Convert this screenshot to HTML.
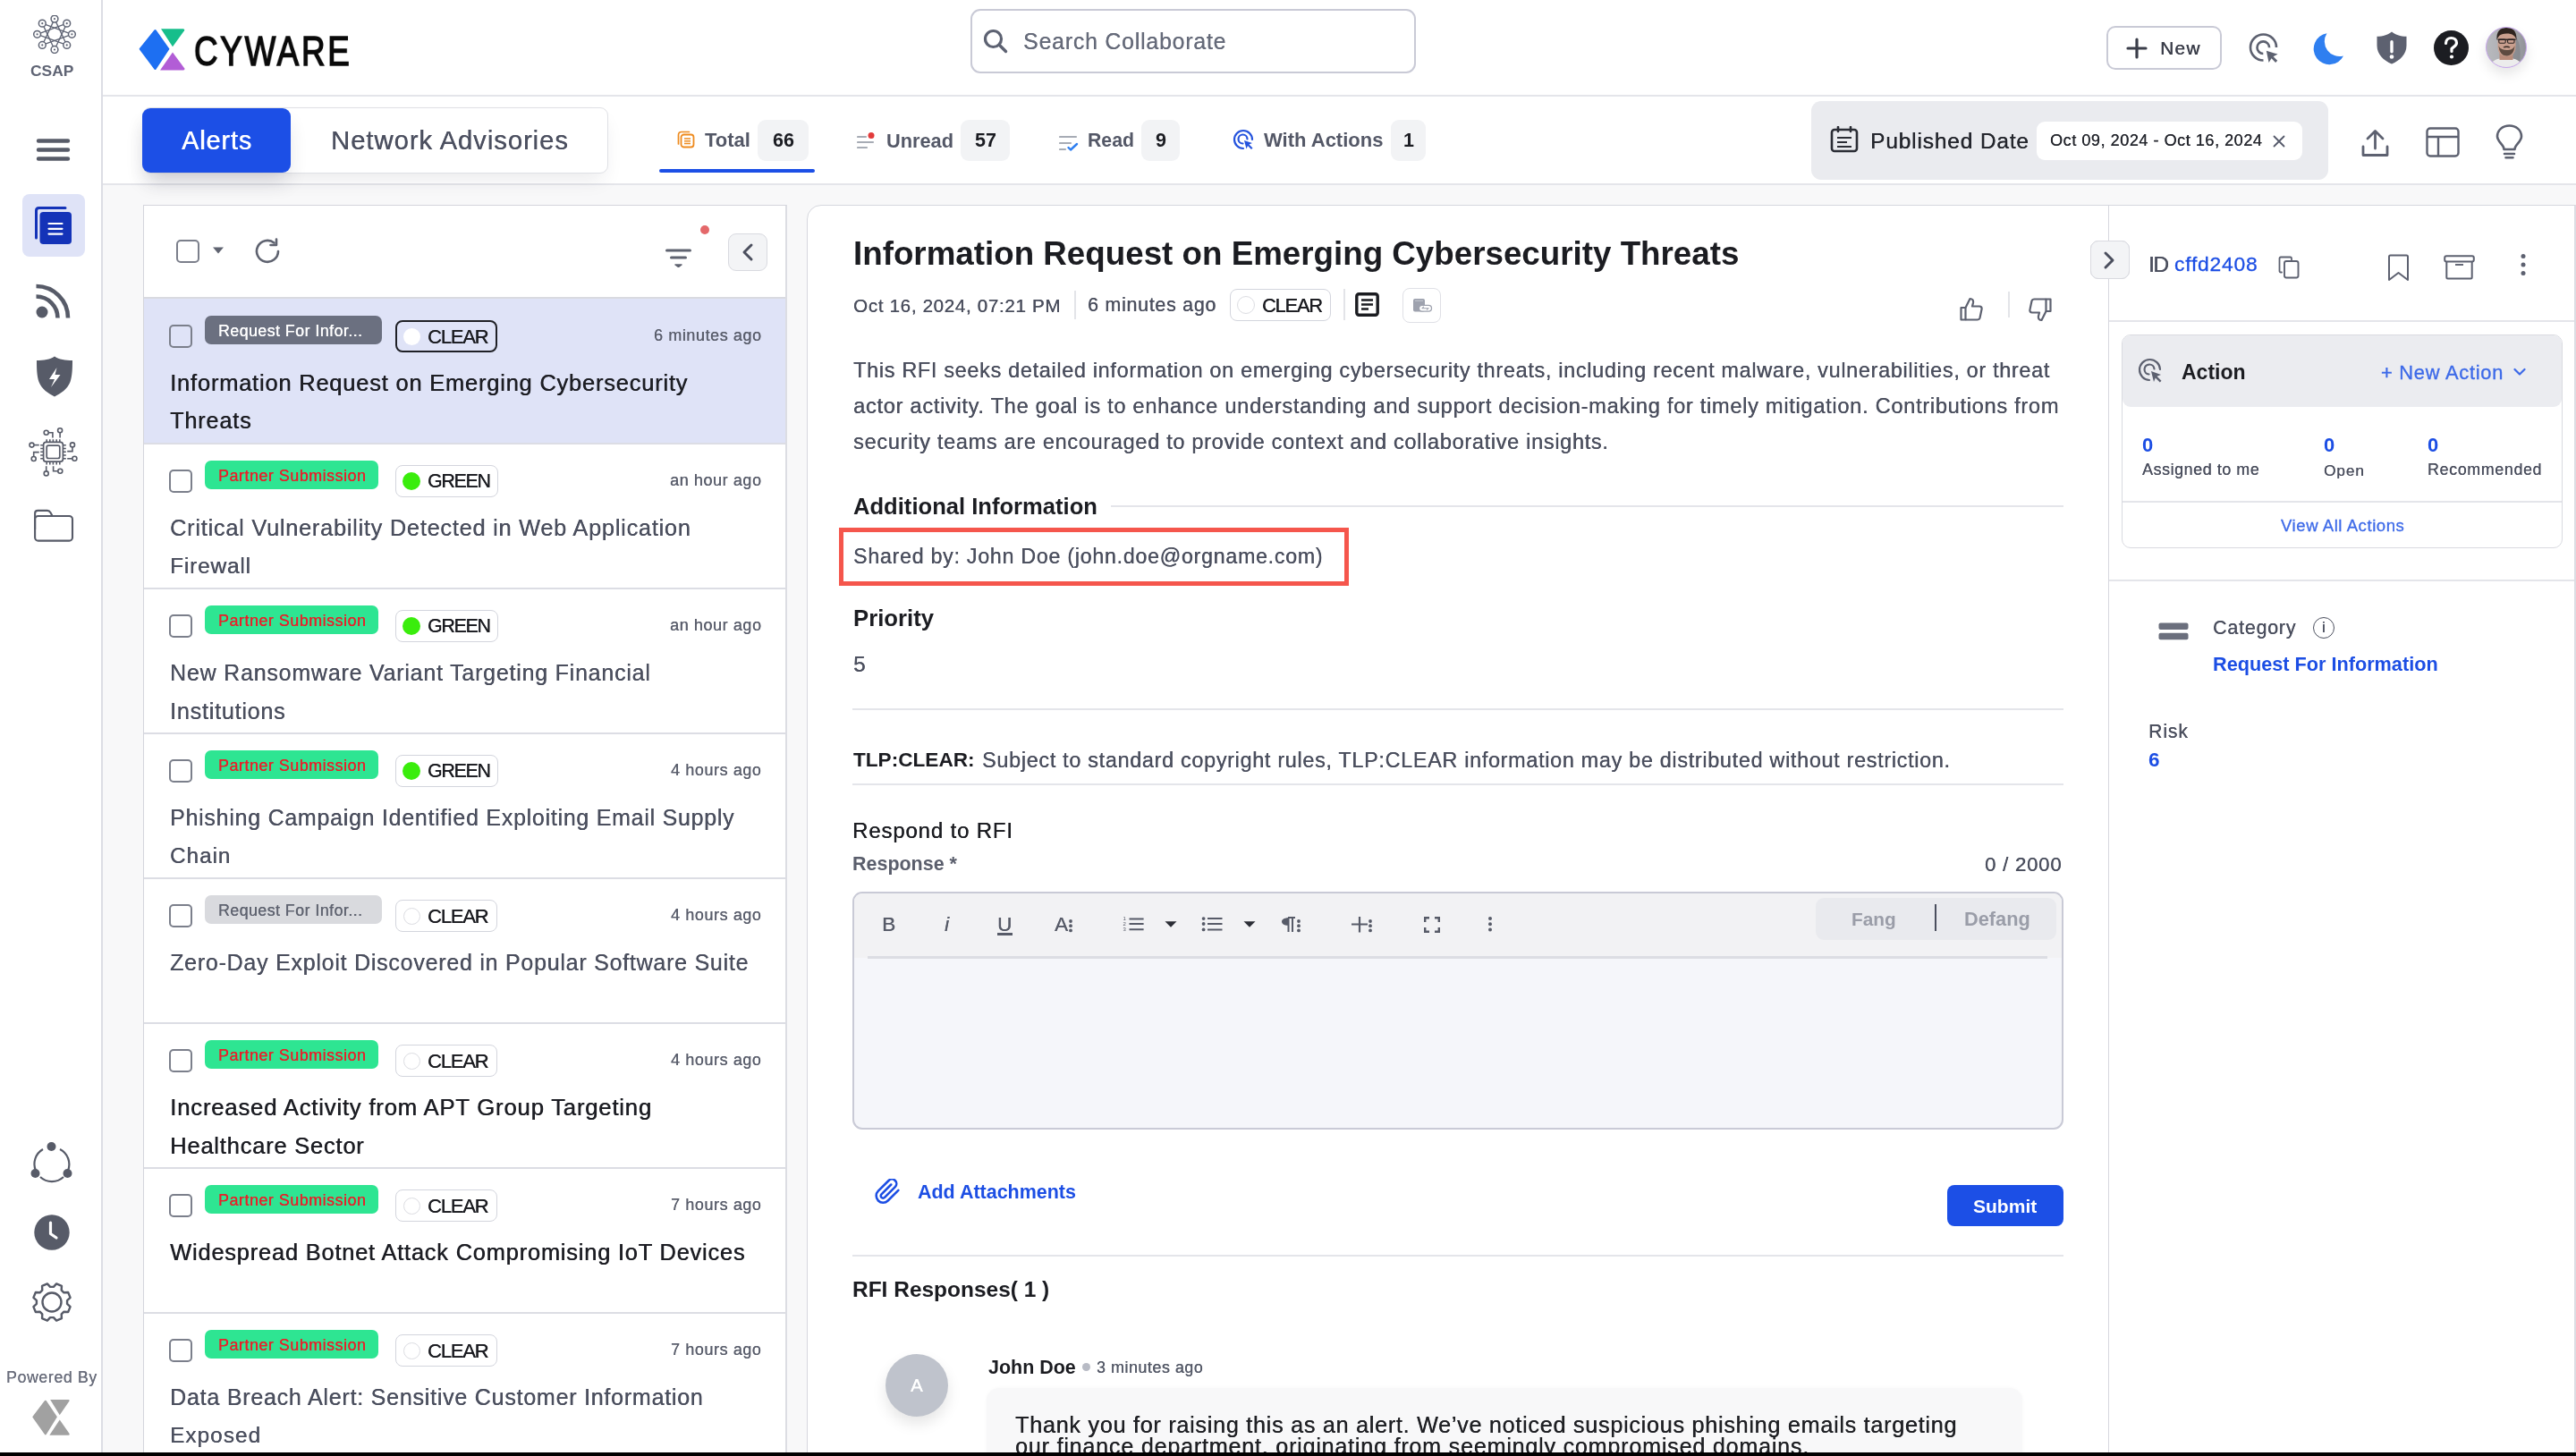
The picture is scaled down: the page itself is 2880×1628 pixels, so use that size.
<!DOCTYPE html>
<html><head><meta charset="utf-8"><title>Cyware CSAP</title>
<style>
html,body{margin:0;padding:0;}
body{width:2880px;height:1628px;position:relative;overflow:hidden;background:#f8f8f9;
 font-family:"Liberation Sans",sans-serif;}
.a{position:absolute;box-sizing:border-box;}
.t{position:absolute;white-space:nowrap;will-change:transform;}
</style></head><body>
<div class="a" style="left:115px;top:0px;width:2765px;height:206px;background:#fff;"></div>
<div class="a" style="left:115px;top:106px;width:2765px;height:2px;background:#e4e5ea;"></div>
<div class="a" style="left:115px;top:205px;width:2765px;height:2px;background:#e4e5ea;"></div>
<div class="a" style="left:0px;top:0px;width:114px;height:1628px;background:#fff;"></div>
<div class="a" style="left:113px;top:0px;width:2px;height:1628px;background:#dcdde4;"></div>
<div class="a" style="left:160px;top:229px;width:720px;height:1411px;background:#fff;border:1px solid #d4d5dc;border-right:2px solid #dcdde3;"></div>
<div class="a" style="left:902px;top:229px;width:1478px;height:1411px;background:#fff;border:1px solid #d6d7de;border-top-left-radius:16px;"></div>
<div class="a" style="left:2357px;top:229px;width:523px;height:1411px;background:#fff;border:1px solid #d6d7de;border-right:2px solid #dcdde3;"></div>
<svg class="a" style="left:150px;top:28px;width:62px;height:56px;" viewBox="150 28 62 56" fill="none"><path d="M172.5 33.5 Q173.5 32.6 174.5 33.5 L189.5 54.8 L174.5 77.6 Q173.5 78.6 172.5 77.6 L156 55.6 Q155.3 54.8 156 54 Z" fill="#1d6ff2"/><path d="M180 32.3 L205 32.3 Q207 32.6 206 34.3 L193 52.3 Z" fill="#17be8b"/><path d="M193 58.4 L206.3 76.6 Q207 78.5 205 78.5 L179 78.5 Z" fill="#b25dd6"/></svg>
<div class="t " style="left:216.70px;top:27.56px;font-size:46.00px;line-height:58px;color:#0a0a0a;transform:scaleX(0.8);transform-origin:0 0;letter-spacing:3.400px;-webkit-text-stroke:1.5px #0a0a0a;">CYWARE</div>
<div class="a" style="left:1085px;top:10px;width:498px;height:72px;border:2px solid #c9cad6;border-radius:11px;background:#fff;"></div>
<svg class="a" style="left:1099px;top:32px;width:28px;height:28px;" viewBox="0 0 28 28" fill="none"><circle cx="11.5" cy="11.5" r="9" stroke="#5d6272" stroke-width="3.2"/><path d="M18.5 18.5 L25.5 25.5" stroke="#5d6272" stroke-width="3.4" stroke-linecap="round"/></svg>
<div class="t " style="left:1143.80px;top:31.08px;font-size:24.87px;line-height:31px;color:#666b7a;letter-spacing:0.799px;text-shadow:0.3px 0 0 #666b7a;">Search Collaborate</div>
<div class="a" style="left:2355px;top:29px;width:129px;height:49px;border:2px solid #c9cad6;border-radius:10px;background:#fff;"></div>
<svg class="a" style="left:2377px;top:42px;width:24px;height:24px;" viewBox="0 0 24 24" fill="none"><path d="M12 2 V22 M2 12 H22" stroke="#3b3e4a" stroke-width="3.2" stroke-linecap="round"/></svg>
<div class="t " style="left:2415.40px;top:41.00px;font-size:20.77px;line-height:26px;color:#3b3e4a;letter-spacing:1.326px;text-shadow:0.5px 0 0 #3b3e4a;">New</div>
<svg class="a" style="left:2510px;top:30px;width:40px;height:45px;" viewBox="0 0 40 45" fill="none"><path d="M20.5 37.5 A14.5 14.5 0 1 1 35 23" stroke="#5d6170" stroke-width="2.6"/><path d="M20.3 30 A6.8 6.8 0 1 1 27.1 23.2" stroke="#5d6170" stroke-width="2.6"/><path d="M23.8 26.8 L36.6 30.6 L31.6 33.2 L36.2 37.8 L34.1 39.9 L29.5 35.3 L26.6 40 Z" fill="#5d6170"/></svg>
<svg class="a" style="left:2586px;top:36px;width:35px;height:37px;" viewBox="0 0 35 37" fill="none"><path d="M15.5 1.2 A17.6 17.6 0 1 0 34 26.5 A16.8 16.8 0 0 1 15.5 1.2 Z" fill="#2f7ff0"/></svg>
<svg class="a" style="left:2657px;top:35px;width:34px;height:37px;" viewBox="0 0 34 37" fill="none"><path d="M17 0.5 C20 3.5 27 5.8 33.5 5.8 V16 C33.5 26 26 32.5 17 36.5 C8 32.5 0.5 26 0.5 16 V5.8 C7 5.8 14 3.5 17 0.5 Z" fill="#5d6170"/><rect x="15.3" y="10" width="3.4" height="14.5" rx="1.7" fill="#fff"/><circle cx="17" cy="28.5" r="2.3" fill="#fff"/></svg>
<svg class="a" style="left:2721px;top:34px;width:39px;height:39px;" viewBox="0 0 39 39" fill="none"><circle cx="19.5" cy="19.5" r="19.5" fill="#1c1d22"/><path d="M13.5 14.5 C13.5 10.5 16.5 8.5 19.5 8.5 C23 8.5 25.5 10.8 25.5 14 C25.5 17.5 21.5 18.5 20 20.5 V23.5" stroke="#fff" stroke-width="3.2" stroke-linecap="round" fill="none"/><circle cx="20" cy="29.5" r="2.1" fill="#fff"/></svg>
<div class="a" style="left:2779px;top:30px;width:46px;height:46px;border-radius:50%;box-shadow:0 7px 14px rgba(0,0,0,0.10);"></div>
<svg class="a" style="left:2779px;top:30px;width:46px;height:46px;" viewBox="0 0 46 46" fill="none"><defs><clipPath id="avc"><circle cx="23" cy="23" r="22.6"/></clipPath><linearGradient id="avbg" x1="0" y1="0" x2="1" y2="0"><stop offset="0" stop-color="#b9babe"/><stop offset="0.6" stop-color="#a9abb0"/><stop offset="1" stop-color="#8f9196"/></linearGradient></defs><g clip-path="url(#avc)"><rect width="46" height="46" fill="url(#avbg)"/><path d="M31 8 C38 14 40 26 38 40 L30 40 Z" fill="#7d7f84" opacity="0.6"/><path d="M4 46 C6 38 12 35 23 35 C34 35 40 38 42 46 Z" fill="#ececec"/><rect x="15.5" y="28" width="15" height="9" fill="#b98c7a"/><path d="M13.5 12 C13.5 6 17.5 4 23.5 4 C29.5 4 33.5 6 33.5 12 V22 C33.5 30 29 33 23.5 33 C18 33 13.5 30 13.5 22 Z" fill="#c99f8e"/><path d="M14.5 21 C15 29 19 32.5 23.5 32.5 C28 32.5 32 29 32.5 21 C31 25 28 26 23.5 26 C19 26 16 25 14.5 21 Z" fill="#5e4b40"/><path d="M19.5 22.5 C21 21 26 21 27.5 22.5 L26.5 23.5 C25 22.8 22 22.8 20.5 23.5 Z" fill="#3a2c26"/><path d="M12.5 15 C11.5 5 16.5 1 23 1 C30 1 35 4 34.5 15 C33.5 10 30 7.5 23.5 7.5 C17 7.5 14 10 12.5 15 Z" fill="#2e241f"/><path d="M13.5 14.2 H33.5" stroke="#2a2322" stroke-width="1.4"/><rect x="14.8" y="14" width="7.4" height="4.2" rx="1.2" stroke="#2a2322" stroke-width="1.1" fill="none"/><rect x="24.6" y="14" width="7.4" height="4.2" rx="1.2" stroke="#2a2322" stroke-width="1.1" fill="none"/></g><circle cx="23" cy="23" r="22.5" stroke="#c7a6ec" stroke-width="1" fill="none"/></svg>
<div class="a" style="left:159px;top:120px;width:521px;height:74px;border:1px solid #dfe0e5;border-radius:9px;background:#fff;box-shadow:0 12px 22px -6px rgba(40,40,60,0.10);"></div>
<div class="a" style="left:159px;top:121px;width:166px;height:72px;background:#1c4fe6;border-radius:9px;box-shadow:0 14px 22px -4px rgba(40,40,60,0.16);"></div>
<div class="t " style="left:203.00px;top:139.16px;font-size:28.68px;line-height:36px;color:#fff;letter-spacing:0.936px;text-shadow:0.6px 0 0 #fff;">Alerts</div>
<div class="t " style="left:369.50px;top:138.45px;font-size:29.29px;line-height:37px;color:#4c5060;letter-spacing:0.935px;text-shadow:0.3px 0 0 #4c5060;">Network Advisories</div>
<svg class="a" style="left:757px;top:146px;width:20px;height:20px;" viewBox="0 0 20 20" fill="none"><path d="M1.5 15 V5 C1.5 3 3 1.5 5 1.5 H13.5" stroke="#ee8b1f" stroke-width="1.7" stroke-linecap="round"/><rect x="4.5" y="4.5" width="14" height="14" rx="3" stroke="#ee8b1f" stroke-width="1.8"/><path d="M8 9 H15 M8 11.7 H15 M8 14.4 H15" stroke="#ee8b1f" stroke-width="1.5"/></svg>
<div class="t " style="left:788.00px;top:143.26px;font-size:22.03px;line-height:28px;color:#545867;font-weight:700;">Total</div>
<div class="a" style="left:847px;top:134px;width:57px;height:46px;background:#f2f3f5;border-radius:9px;"></div>
<div class="t " style="left:863.54px;top:144.45px;font-size:21.50px;line-height:27px;color:#1b1c22;font-weight:700;">66</div>
<svg class="a" style="left:958px;top:148px;width:22px;height:20px;" viewBox="0 0 22 20" fill="none"><path d="M1 5 H10 M1 11 H18 M1 17 H11" stroke="#a7acb5" stroke-width="2.2" stroke-linecap="round"/><circle cx="16" cy="3.5" r="3.5" fill="#e23b3b"/></svg>
<div class="t " style="left:991.00px;top:143.86px;font-size:21.77px;line-height:27px;color:#545867;font-weight:700;">Unread</div>
<div class="a" style="left:1074px;top:134px;width:55px;height:46px;background:#f2f3f5;border-radius:9px;"></div>
<div class="t " style="left:1089.54px;top:144.45px;font-size:21.50px;line-height:27px;color:#1b1c22;font-weight:700;">57</div>
<svg class="a" style="left:1184px;top:151px;width:22px;height:19px;" viewBox="0 0 22 19" fill="none"><path d="M1 2 H19 M1 9 H13 M1 16 H7" stroke="#a7acb5" stroke-width="2.2" stroke-linecap="round"/><path d="M10.5 14 L13 16.5 L20 10" stroke="#2f7ff0" stroke-width="2.4" stroke-linecap="round" stroke-linejoin="round"/></svg>
<div class="t " style="left:1216.00px;top:144.03px;font-size:21.26px;line-height:27px;color:#545867;font-weight:700;">Read</div>
<div class="a" style="left:1276px;top:134px;width:43px;height:46px;background:#f2f3f5;border-radius:9px;"></div>
<div class="t " style="left:1291.52px;top:144.45px;font-size:21.50px;line-height:27px;color:#1b1c22;font-weight:700;">9</div>
<svg class="a" style="left:1378px;top:144px;width:24px;height:24px;" viewBox="0 0 24 24" fill="none"><path d="M12 22 A10 10 0 1 1 22 12" stroke="#2453dd" stroke-width="2.2" stroke-linecap="round"/><path d="M11.5 16.5 A5 5 0 1 1 16.5 11.5" stroke="#2453dd" stroke-width="2.2" stroke-linecap="round"/><path d="M13 13 L22 16 L18.5 17.5 L22.5 21.5 L21 23 L17 19 L15.5 22.5 Z" fill="#2453dd"/></svg>
<div class="t " style="left:1412.50px;top:143.27px;font-size:22.01px;line-height:28px;color:#545867;font-weight:700;">With Actions</div>
<div class="a" style="left:1555px;top:134px;width:39px;height:46px;background:#f2f3f5;border-radius:9px;"></div>
<div class="t " style="left:1568.52px;top:144.45px;font-size:21.50px;line-height:27px;color:#1b1c22;font-weight:700;">1</div>
<div class="a" style="left:737px;top:189px;width:174px;height:4px;background:#1c4fe6;border-radius:2px;"></div>
<div class="a" style="left:2025px;top:113px;width:578px;height:88px;background:#eaebef;border-radius:11px;"></div>
<svg class="a" style="left:2046px;top:141px;width:32px;height:30px;" viewBox="0 0 32 30" fill="none"><rect x="2" y="4" width="28" height="24" rx="3" stroke="#2b2d35" stroke-width="2.6"/><path d="M9 1 V6 M23 1 V6" stroke="#2b2d35" stroke-width="2.6" stroke-linecap="round"/><path d="M8 13 H24 M8 18 H19 M8 23 H24" stroke="#2b2d35" stroke-width="2.2"/></svg>
<div class="t " style="left:2091.00px;top:141.80px;font-size:24.53px;line-height:31px;color:#24262d;letter-spacing:0.817px;text-shadow:0.3px 0 0 #24262d;">Published Date</div>
<div class="a" style="left:2277px;top:136px;width:297px;height:43px;background:#fff;border-radius:9px;"></div>
<div class="t " style="left:2292.00px;top:146.35px;font-size:18.05px;line-height:23px;color:#25272e;letter-spacing:0.547px;text-shadow:0.3px 0 0 #25272e;">Oct 09, 2024 - Oct 16, 2024</div>
<svg class="a" style="left:2541px;top:151px;width:14px;height:14px;" viewBox="0 0 14 14" fill="none"><path d="M1.5 1.5 L12.5 12.5 M12.5 1.5 L1.5 12.5" stroke="#55596a" stroke-width="1.8" stroke-linecap="round"/></svg>
<svg class="a" style="left:2640px;top:144px;width:31px;height:32px;" viewBox="0 0 31 32" fill="none"><path d="M15.5 22 V3 M7 11 L15.5 2.5 L24 11" stroke="#5d6170" stroke-width="2.8" stroke-linecap="round" stroke-linejoin="round"/><path d="M2 20 V29.5 H29 V20" stroke="#5d6170" stroke-width="2.8" stroke-linecap="round" stroke-linejoin="round"/></svg>
<svg class="a" style="left:2712px;top:142px;width:38px;height:34px;" viewBox="0 0 38 34" fill="none"><rect x="1.5" y="1.5" width="35" height="31" rx="3.5" stroke="#5d6170" stroke-width="2.4"/><path d="M1.5 11 H36.5 M14 11 V32.5" stroke="#5d6170" stroke-width="2.4"/></svg>
<svg class="a" style="left:2790px;top:139px;width:31px;height:39px;" viewBox="0 0 31 39" fill="none"><path d="M9.5 28 C9.5 23 2 19.5 2 13.5 C2 6.5 8 1.5 15.5 1.5 C23 1.5 29 6.5 29 13.5 C29 19.5 21.5 23 21.5 28 Z" stroke="#5d6170" stroke-width="2.6" stroke-linejoin="round"/><path d="M10 33 H21 M11.5 37.2 H19.5" stroke="#5d6170" stroke-width="2.6" stroke-linecap="round"/></svg>
<svg class="a" style="left:36px;top:17px;width:50px;height:43px;" viewBox="0 0 50 43" fill="none"><path d="M25.00 4.10 L38.72 33.46" stroke="#5f6474" stroke-width="1.3"/><path d="M38.72 9.14 L25.00 38.50" stroke="#5f6474" stroke-width="1.3"/><path d="M44.40 21.30 L11.28 33.46" stroke="#5f6474" stroke-width="1.3"/><path d="M38.72 33.46 L5.60 21.30" stroke="#5f6474" stroke-width="1.3"/><path d="M25.00 38.50 L11.28 9.14" stroke="#5f6474" stroke-width="1.3"/><path d="M11.28 33.46 L25.00 4.10" stroke="#5f6474" stroke-width="1.3"/><path d="M5.60 21.30 L38.72 9.14" stroke="#5f6474" stroke-width="1.3"/><path d="M11.28 9.14 L44.40 21.30" stroke="#5f6474" stroke-width="1.3"/><circle cx="25.00" cy="4.10" r="3.9" fill="#fff" stroke="#5f6474" stroke-width="1.5"/><circle cx="25.00" cy="4.10" r="1.1" fill="#5f6474"/><circle cx="38.72" cy="9.14" r="3.9" fill="#fff" stroke="#5f6474" stroke-width="1.5"/><circle cx="38.72" cy="9.14" r="1.1" fill="#5f6474"/><circle cx="44.40" cy="21.30" r="3.9" fill="#fff" stroke="#5f6474" stroke-width="1.5"/><circle cx="44.40" cy="21.30" r="1.1" fill="#5f6474"/><circle cx="38.72" cy="33.46" r="3.9" fill="#fff" stroke="#5f6474" stroke-width="1.5"/><circle cx="38.72" cy="33.46" r="1.1" fill="#5f6474"/><circle cx="25.00" cy="38.50" r="3.9" fill="#fff" stroke="#5f6474" stroke-width="1.5"/><circle cx="25.00" cy="38.50" r="1.1" fill="#5f6474"/><circle cx="11.28" cy="33.46" r="3.9" fill="#fff" stroke="#5f6474" stroke-width="1.5"/><circle cx="11.28" cy="33.46" r="1.1" fill="#5f6474"/><circle cx="5.60" cy="21.30" r="3.9" fill="#fff" stroke="#5f6474" stroke-width="1.5"/><circle cx="5.60" cy="21.30" r="1.1" fill="#5f6474"/><circle cx="11.28" cy="9.14" r="3.9" fill="#fff" stroke="#5f6474" stroke-width="1.5"/><circle cx="11.28" cy="9.14" r="1.1" fill="#5f6474"/></svg>
<div class="t " style="left:33.50px;top:67.66px;font-size:17.42px;line-height:22px;color:#5f6474;font-weight:700;">CSAP</div>
<svg class="a" style="left:40px;top:154px;width:39px;height:27px;" viewBox="0 0 39 27" fill="none"><path d="M3 3.5 H36 M3 13.5 H36 M3 23.5 H36" stroke="#575b68" stroke-width="4.4" stroke-linecap="round"/></svg>
<div class="a" style="left:25px;top:217px;width:70px;height:70px;background:#dfe3f7;border-radius:8px;"></div>
<svg class="a" style="left:38px;top:231px;width:44px;height:44px;" viewBox="0 0 44 44" fill="none"><path d="M2.5 35 V4.5 C2.5 2.5 3.5 1.5 5.5 1.5 H35" stroke="#1433b8" stroke-width="3" stroke-linecap="round"/><rect x="6.5" y="6" width="35.5" height="36" rx="4" fill="#1433b8"/><path d="M16.5 19 H31.5 M16.5 24.8 H31.5 M16.5 30.6 H31.5" stroke="#fff" stroke-width="2.2" stroke-linecap="round"/></svg>
<svg class="a" style="left:40px;top:317px;width:39px;height:39px;" viewBox="0 0 39 39" fill="none"><circle cx="7" cy="32" r="6.5" fill="#575b68"/><path d="M0.5 14.5 A24 24 0 0 1 24.5 38.5" stroke="#575b68" stroke-width="4.6"/><path d="M0.5 3 A35.5 35.5 0 0 1 36 38.5" stroke="#575b68" stroke-width="4.6"/></svg>
<svg class="a" style="left:40px;top:398px;width:42px;height:46px;" viewBox="0 0 42 46" fill="none"><path d="M21 0.5 C26 4 33 5 41 5 C41 12 41 22 38.5 29 C35.5 37 28 42 21 45.5 C14 42 6.5 37 3.5 29 C1 22 1 12 1 5 C9 5 16 4 21 0.5 Z" fill="#575b68"/><path d="M23.5 13 L15 26 H21 L17 35 L27.5 21 H21.5 Z" fill="#fff"/></svg>
<svg class="a" style="left:25px;top:470px;width:70px;height:70px;" viewBox="0 0 70 70" fill="none"><rect x="23.6" y="24.3" width="21.8" height="21.9" rx="3" stroke="#575b68" stroke-width="1.7"/><rect x="27.2" y="28.1" width="14.6" height="14.4" rx="2" stroke="#575b68" stroke-width="1.7"/><path d="M27.2 21.2 V24 M27.2 46.6 V49.5" stroke="#575b68" stroke-width="1.6"/><path d="M30.8 21.2 V24 M30.8 46.6 V49.5" stroke="#575b68" stroke-width="1.6"/><path d="M34.4 21.2 V24 M34.4 46.6 V49.5" stroke="#575b68" stroke-width="1.6"/><path d="M38.2 21.2 V24 M38.2 46.6 V49.5" stroke="#575b68" stroke-width="1.6"/><path d="M41.8 21.2 V24 M41.8 46.6 V49.5" stroke="#575b68" stroke-width="1.6"/><path d="M20.2 27.8 H23 M45.9 27.8 H48.8" stroke="#575b68" stroke-width="1.6"/><path d="M20.2 31.5 H23 M45.9 31.5 H48.8" stroke="#575b68" stroke-width="1.6"/><path d="M20.2 35.3 H23 M45.9 35.3 H48.8" stroke="#575b68" stroke-width="1.6"/><path d="M20.2 39 H23 M45.9 39 H48.8" stroke="#575b68" stroke-width="1.6"/><path d="M20.2 42.7 H23 M45.9 42.7 H48.8" stroke="#575b68" stroke-width="1.6"/><path d="M33.9 19.5 V13.7 H29.2" stroke="#575b68" stroke-width="1.6"/><circle cx="26.7" cy="13.7" r="2.5" stroke="#575b68" stroke-width="1.6"/><path d="M42.1 19.5 V13.9" stroke="#575b68" stroke-width="1.6"/><circle cx="42.1" cy="11.3" r="2.5" stroke="#575b68" stroke-width="1.6"/><path d="M18.75 27.6 H13.1" stroke="#575b68" stroke-width="1.6"/><circle cx="10.5" cy="27.6" r="2.5" stroke="#575b68" stroke-width="1.6"/><path d="M18.75 35.6 H12.7 V40.4" stroke="#575b68" stroke-width="1.6"/><circle cx="12.7" cy="43" r="2.5" stroke="#575b68" stroke-width="1.6"/><path d="M50.2 34.6 H56 V30" stroke="#575b68" stroke-width="1.6"/><circle cx="56" cy="27.4" r="2.5" stroke="#575b68" stroke-width="1.6"/><path d="M50.2 42.8 H55.8" stroke="#575b68" stroke-width="1.6"/><circle cx="58.4" cy="42.8" r="2.5" stroke="#575b68" stroke-width="1.6"/><path d="M26.7 51.2 V56.8" stroke="#575b68" stroke-width="1.6"/><circle cx="26.7" cy="59.4" r="2.5" stroke="#575b68" stroke-width="1.6"/><path d="M34.6 51.2 V56.7 H39.7" stroke="#575b68" stroke-width="1.6"/><circle cx="42.3" cy="56.7" r="2.5" stroke="#575b68" stroke-width="1.6"/></svg>
<svg class="a" style="left:30px;top:560px;width:60px;height:55px;" viewBox="30 560 60 55" fill="none"><rect x="39.1" y="577" width="41.9" height="27.6" rx="3.6" stroke="#575b68" stroke-width="2.1"/><path d="M39.1 592 V574 C39.1 572 40.4 570.9 42.4 570.9 H53 C54.6 570.9 55.6 571.6 56.4 573 L58.6 577" stroke="#575b68" stroke-width="2.1" stroke-linejoin="round"/></svg>
<svg class="a" style="left:34px;top:1276px;width:48px;height:49px;" viewBox="0 0 48 49" fill="none"><path d="M14 9 A19 19 0 0 0 6 33" stroke="#575b68" stroke-width="2.2"/><path d="M33 9 A19 19 0 0 1 42 33" stroke="#575b68" stroke-width="2.2"/><path d="M11 40 A19 19 0 0 0 37 40" stroke="#575b68" stroke-width="2.2"/><circle cx="23.5" cy="6" r="5" fill="#575b68"/><circle cx="5.5" cy="36" r="5" fill="#575b68"/><circle cx="41.5" cy="36" r="5" fill="#575b68"/></svg>
<svg class="a" style="left:38px;top:1358px;width:40px;height:40px;" viewBox="0 0 40 40" fill="none"><circle cx="20" cy="20" r="19.7" fill="#575b68"/><path d="M18.5 9 V21.5 L25 26" stroke="#fff" stroke-width="3.2" stroke-linecap="round" stroke-linejoin="round"/></svg>
<svg class="a" style="left:34.6px;top:1433.3px;width:45.99999999999999px;height:46.0px;" viewBox="0 0 46 46" fill="none"><path d="M24.93 5.91 L28.09 2.42 L33.95 4.85 L33.72 9.55 L36.45 12.28 L41.15 12.05 L43.58 17.91 L40.09 21.07 L40.09 24.93 L43.58 28.09 L41.15 33.95 L36.45 33.72 L33.72 36.45 L33.95 41.15 L28.09 43.58 L24.93 40.09 L21.07 40.09 L17.91 43.58 L12.05 41.15 L12.28 36.45 L9.55 33.72 L4.85 33.95 L2.42 28.09 L5.91 24.93 L5.91 21.07 L2.42 17.91 L4.85 12.05 L9.55 12.28 L12.28 9.55 L12.05 4.85 L17.91 2.42 L21.07 5.91 Z" stroke="#575b68" stroke-width="2.4" stroke-linejoin="round"/><circle cx="23" cy="23" r="10.5" stroke="#575b68" stroke-width="2.4"/></svg>
<div class="t " style="left:7.00px;top:1529.39px;font-size:17.64px;line-height:22px;color:#6a6e7c;letter-spacing:0.675px;text-shadow:0.3px 0 0 #6a6e7c;">Powered By</div>
<svg class="a" style="left:36px;top:1565px;width:42px;height:40px;" viewBox="155.3 32.3 51.5 46.5" preserveAspectRatio="none" fill="none"><path d="M172.5 33.5 Q173.5 32.6 174.5 33.5 L189.5 54.8 L174.5 77.6 Q173.5 78.6 172.5 77.6 L156 55.6 Q155.3 54.8 156 54 Z" fill="#a1a1a1"/><path d="M180 32.3 L205 32.3 Q207 32.6 206 34.3 L193 52.3 Z" fill="#a1a1a1"/><path d="M193 58.4 L206.3 76.6 Q207 78.5 205 78.5 L179 78.5 Z" fill="#a1a1a1"/></svg>
<div class="a" style="left:197px;top:268px;width:26px;height:26px;border:2px solid #7b7f8b;border-radius:5px;"></div>
<svg class="a" style="left:237px;top:276px;width:14px;height:8px;" viewBox="0 0 14 8" fill="none"><path d="M1 0.5 H13 L7 7.5 Z" fill="#5f6370"/></svg>
<svg class="a" style="left:284px;top:266px;width:32px;height:30px;" viewBox="0 0 32 30" fill="none"><path d="M27 15 A12 12 0 1 1 22.5 5.5" stroke="#5f6370" stroke-width="2.6" stroke-linecap="round"/><path d="M25 1.5 V8 H18.5" stroke="#5f6370" stroke-width="2.6" stroke-linecap="round" stroke-linejoin="round"/></svg>
<svg class="a" style="left:744px;top:277px;width:29px;height:22px;" viewBox="0 0 29 22" fill="none"><path d="M1.5 3 H27.5" stroke="#5f6370" stroke-width="3" stroke-linecap="round"/><path d="M6.5 11 H22.5" stroke="#5f6370" stroke-width="3" stroke-linecap="round"/><path d="M11 19 H18 L14.5 21.5 Z" fill="#5f6370" stroke="#5f6370" stroke-width="1.5" stroke-linejoin="round"/></svg>
<div class="a" style="left:783px;top:252px;width:10px;height:10px;border-radius:50%;background:#e4686a;"></div>
<div class="a" style="left:814px;top:261px;width:44px;height:42px;background:#f3f4f6;border:1px solid #d9dae0;border-radius:9px;"></div>
<svg class="a" style="left:828px;top:271px;width:16px;height:22px;" viewBox="0 0 16 22" fill="none"><path d="M12 3 L4 11 L12 19" stroke="#4b4f5e" stroke-width="3" stroke-linecap="round" stroke-linejoin="round"/></svg>
<div class="a" style="left:161px;top:332px;width:717px;height:2px;background:#d9dae0;"></div>
<div class="a" style="left:161px;top:334px;width:717px;height:162px;background:#dfe3f7;"></div>
<div class="a" style="left:161px;top:495px;width:717px;height:2px;background:#dcdde4;"></div>
<div class="a" style="left:189px;top:363px;width:26px;height:26px;border:2px solid #7b7f8b;border-radius:5px;"></div>
<div class="a" style="left:229px;top:353px;width:198px;height:32px;background:#6b7080;border-radius:7px;"></div>
<div class="t " style="left:243.70px;top:358.87px;font-size:17.68px;line-height:22px;color:#fff;letter-spacing:0.508px;text-shadow:0.3px 0 0 #fff;">Request For Infor...</div>
<div class="a" style="left:442px;top:358px;width:114px;height:36px;border:2px solid #1f2026;border-radius:8px;background:#dfe3f7;"></div>
<div class="a" style="left:451px;top:367px;width:19px;height:19px;border-radius:50%;background:#fff;"></div>
<div class="t " style="left:477.50px;top:362.88px;font-size:21.98px;line-height:27px;color:#1b1c21;letter-spacing:-1.199px;text-shadow:0.3px 0 0 #1b1c21;">CLEAR</div>
<div class="t " style="left:731.01px;top:364.28px;font-size:17.95px;line-height:22px;color:#5a5e6c;letter-spacing:0.600px;text-shadow:0.3px 0 0 #5a5e6c;">6 minutes ago</div>
<div class="t " style="left:189.60px;top:412.17px;font-size:25.47px;line-height:32px;color:#1d1e24;letter-spacing:0.789px;text-shadow:0.5px 0 0 #1d1e24;">Information Request on Emerging Cybersecurity</div>
<div class="t " style="left:189.60px;top:455.31px;font-size:25.09px;line-height:31px;color:#1d1e24;letter-spacing:0.905px;text-shadow:0.5px 0 0 #1d1e24;">Threats</div>
<div class="a" style="left:161px;top:657px;width:717px;height:2px;background:#dcdde4;"></div>
<div class="a" style="left:189px;top:525px;width:26px;height:26px;border:2px solid #7b7f8b;border-radius:5px;"></div>
<div class="a" style="left:229px;top:515px;width:194px;height:32px;background:#2ee592;border-radius:7px;"></div>
<div class="t " style="left:243.70px;top:520.85px;font-size:17.75px;line-height:22px;color:#e8202a;letter-spacing:0.582px;text-shadow:0.3px 0 0 #e8202a;">Partner Submission</div>
<div class="a" style="left:442px;top:520px;width:115px;height:36px;border:1px solid #d3d5dd;border-radius:8px;background:#fff;"></div>
<div class="a" style="left:450px;top:528px;width:20px;height:20px;border-radius:50%;background:#3aed0c;"></div>
<div class="t " style="left:477.50px;top:525.12px;font-size:21.30px;line-height:27px;color:#1b1c21;letter-spacing:-1.239px;text-shadow:0.3px 0 0 #1b1c21;">GREEN</div>
<div class="t " style="left:749.04px;top:526.28px;font-size:17.95px;line-height:22px;color:#5a5e6c;letter-spacing:0.612px;text-shadow:0.3px 0 0 #5a5e6c;">an hour ago</div>
<div class="t " style="left:189.60px;top:574.19px;font-size:25.43px;line-height:32px;color:#4b4f5e;letter-spacing:0.713px;text-shadow:0.3px 0 0 #4b4f5e;">Critical Vulnerability Detected in Web Application</div>
<div class="t " style="left:189.60px;top:617.49px;font-size:24.56px;line-height:31px;color:#4b4f5e;letter-spacing:0.771px;text-shadow:0.3px 0 0 #4b4f5e;">Firewall</div>
<div class="a" style="left:161px;top:819px;width:717px;height:2px;background:#dcdde4;"></div>
<div class="a" style="left:189px;top:687px;width:26px;height:26px;border:2px solid #7b7f8b;border-radius:5px;"></div>
<div class="a" style="left:229px;top:677px;width:194px;height:32px;background:#2ee592;border-radius:7px;"></div>
<div class="t " style="left:243.70px;top:682.85px;font-size:17.75px;line-height:22px;color:#e8202a;letter-spacing:0.582px;text-shadow:0.3px 0 0 #e8202a;">Partner Submission</div>
<div class="a" style="left:442px;top:682px;width:115px;height:36px;border:1px solid #d3d5dd;border-radius:8px;background:#fff;"></div>
<div class="a" style="left:450px;top:690px;width:20px;height:20px;border-radius:50%;background:#3aed0c;"></div>
<div class="t " style="left:477.50px;top:687.12px;font-size:21.30px;line-height:27px;color:#1b1c21;letter-spacing:-1.239px;text-shadow:0.3px 0 0 #1b1c21;">GREEN</div>
<div class="t " style="left:749.04px;top:688.28px;font-size:17.95px;line-height:22px;color:#5a5e6c;letter-spacing:0.612px;text-shadow:0.3px 0 0 #5a5e6c;">an hour ago</div>
<div class="t " style="left:189.60px;top:736.84px;font-size:24.99px;line-height:31px;color:#4b4f5e;letter-spacing:0.786px;text-shadow:0.3px 0 0 #4b4f5e;">New Ransomware Variant Targeting Financial</div>
<div class="t " style="left:189.60px;top:778.73px;font-size:25.31px;line-height:32px;color:#4b4f5e;letter-spacing:0.702px;text-shadow:0.3px 0 0 #4b4f5e;">Institutions</div>
<div class="a" style="left:161px;top:981px;width:717px;height:2px;background:#dcdde4;"></div>
<div class="a" style="left:189px;top:849px;width:26px;height:26px;border:2px solid #7b7f8b;border-radius:5px;"></div>
<div class="a" style="left:229px;top:839px;width:194px;height:32px;background:#2ee592;border-radius:7px;"></div>
<div class="t " style="left:243.70px;top:844.85px;font-size:17.75px;line-height:22px;color:#e8202a;letter-spacing:0.582px;text-shadow:0.3px 0 0 #e8202a;">Partner Submission</div>
<div class="a" style="left:442px;top:844px;width:115px;height:36px;border:1px solid #d3d5dd;border-radius:8px;background:#fff;"></div>
<div class="a" style="left:450px;top:852px;width:20px;height:20px;border-radius:50%;background:#3aed0c;"></div>
<div class="t " style="left:477.50px;top:849.12px;font-size:21.30px;line-height:27px;color:#1b1c21;letter-spacing:-1.239px;text-shadow:0.3px 0 0 #1b1c21;">GREEN</div>
<div class="t " style="left:750.12px;top:850.28px;font-size:17.95px;line-height:22px;color:#5a5e6c;letter-spacing:0.605px;text-shadow:0.3px 0 0 #5a5e6c;">4 hours ago</div>
<div class="t " style="left:189.60px;top:898.84px;font-size:24.98px;line-height:31px;color:#4b4f5e;letter-spacing:0.742px;text-shadow:0.3px 0 0 #4b4f5e;">Phishing Campaign Identified Exploiting Email Supply</div>
<div class="t " style="left:189.60px;top:942.11px;font-size:24.21px;line-height:30px;color:#4b4f5e;letter-spacing:1.009px;text-shadow:0.3px 0 0 #4b4f5e;">Chain</div>
<div class="a" style="left:161px;top:1143px;width:717px;height:2px;background:#dcdde4;"></div>
<div class="a" style="left:189px;top:1011px;width:26px;height:26px;border:2px solid #7b7f8b;border-radius:5px;"></div>
<div class="a" style="left:229px;top:1001px;width:198px;height:32px;background:#d9dade;border-radius:7px;"></div>
<div class="t " style="left:243.70px;top:1006.87px;font-size:17.68px;line-height:22px;color:#5f6370;letter-spacing:0.508px;text-shadow:0.3px 0 0 #5f6370;">Request For Infor...</div>
<div class="a" style="left:442px;top:1006px;width:114px;height:36px;border:1px solid #d3d5dd;border-radius:8px;background:#fff;"></div>
<div class="a" style="left:451px;top:1015px;width:19px;height:19px;border-radius:50%;border:1.5px solid #dcdde2;box-sizing:border-box;"></div>
<div class="t " style="left:477.50px;top:1010.88px;font-size:21.98px;line-height:27px;color:#1b1c21;letter-spacing:-1.199px;text-shadow:0.3px 0 0 #1b1c21;">CLEAR</div>
<div class="t " style="left:750.12px;top:1012.28px;font-size:17.95px;line-height:22px;color:#5a5e6c;letter-spacing:0.605px;text-shadow:0.3px 0 0 #5a5e6c;">4 hours ago</div>
<div class="t " style="left:189.60px;top:1060.83px;font-size:25.02px;line-height:31px;color:#4b4f5e;letter-spacing:0.746px;text-shadow:0.3px 0 0 #4b4f5e;">Zero-Day Exploit Discovered in Popular Software Suite</div>
<div class="a" style="left:161px;top:1305px;width:717px;height:2px;background:#dcdde4;"></div>
<div class="a" style="left:189px;top:1173px;width:26px;height:26px;border:2px solid #7b7f8b;border-radius:5px;"></div>
<div class="a" style="left:229px;top:1163px;width:194px;height:32px;background:#2ee592;border-radius:7px;"></div>
<div class="t " style="left:243.70px;top:1168.85px;font-size:17.75px;line-height:22px;color:#e8202a;letter-spacing:0.582px;text-shadow:0.3px 0 0 #e8202a;">Partner Submission</div>
<div class="a" style="left:442px;top:1168px;width:114px;height:36px;border:1px solid #d3d5dd;border-radius:8px;background:#fff;"></div>
<div class="a" style="left:451px;top:1177px;width:19px;height:19px;border-radius:50%;border:1.5px solid #dcdde2;box-sizing:border-box;"></div>
<div class="t " style="left:477.50px;top:1172.88px;font-size:21.98px;line-height:27px;color:#1b1c21;letter-spacing:-1.199px;text-shadow:0.3px 0 0 #1b1c21;">CLEAR</div>
<div class="t " style="left:750.12px;top:1174.28px;font-size:17.95px;line-height:22px;color:#5a5e6c;letter-spacing:0.605px;text-shadow:0.3px 0 0 #5a5e6c;">4 hours ago</div>
<div class="t " style="left:189.60px;top:1222.07px;font-size:25.76px;line-height:32px;color:#1d1e24;letter-spacing:0.769px;text-shadow:0.5px 0 0 #1d1e24;">Increased Activity from APT Group Targeting</div>
<div class="t " style="left:189.60px;top:1264.69px;font-size:25.44px;line-height:32px;color:#1d1e24;letter-spacing:0.812px;text-shadow:0.5px 0 0 #1d1e24;">Healthcare Sector</div>
<div class="a" style="left:161px;top:1467px;width:717px;height:2px;background:#dcdde4;"></div>
<div class="a" style="left:189px;top:1335px;width:26px;height:26px;border:2px solid #7b7f8b;border-radius:5px;"></div>
<div class="a" style="left:229px;top:1325px;width:194px;height:32px;background:#2ee592;border-radius:7px;"></div>
<div class="t " style="left:243.70px;top:1330.85px;font-size:17.75px;line-height:22px;color:#e8202a;letter-spacing:0.582px;text-shadow:0.3px 0 0 #e8202a;">Partner Submission</div>
<div class="a" style="left:442px;top:1330px;width:114px;height:36px;border:1px solid #d3d5dd;border-radius:8px;background:#fff;"></div>
<div class="a" style="left:451px;top:1339px;width:19px;height:19px;border-radius:50%;border:1.5px solid #dcdde2;box-sizing:border-box;"></div>
<div class="t " style="left:477.50px;top:1334.88px;font-size:21.98px;line-height:27px;color:#1b1c21;letter-spacing:-1.199px;text-shadow:0.3px 0 0 #1b1c21;">CLEAR</div>
<div class="t " style="left:750.12px;top:1336.28px;font-size:17.95px;line-height:22px;color:#5a5e6c;letter-spacing:0.605px;text-shadow:0.3px 0 0 #5a5e6c;">7 hours ago</div>
<div class="t " style="left:189.60px;top:1384.19px;font-size:25.41px;line-height:32px;color:#1d1e24;letter-spacing:0.803px;text-shadow:0.5px 0 0 #1d1e24;">Widespread Botnet Attack Compromising IoT Devices</div>
<div class="a" style="left:161px;top:1639px;width:717px;height:2px;background:#dcdde4;"></div>
<div class="a" style="left:189px;top:1497px;width:26px;height:26px;border:2px solid #7b7f8b;border-radius:5px;"></div>
<div class="a" style="left:229px;top:1487px;width:194px;height:32px;background:#2ee592;border-radius:7px;"></div>
<div class="t " style="left:243.70px;top:1492.85px;font-size:17.75px;line-height:22px;color:#e8202a;letter-spacing:0.582px;text-shadow:0.3px 0 0 #e8202a;">Partner Submission</div>
<div class="a" style="left:442px;top:1492px;width:114px;height:36px;border:1px solid #d3d5dd;border-radius:8px;background:#fff;"></div>
<div class="a" style="left:451px;top:1501px;width:19px;height:19px;border-radius:50%;border:1.5px solid #dcdde2;box-sizing:border-box;"></div>
<div class="t " style="left:477.50px;top:1496.88px;font-size:21.98px;line-height:27px;color:#1b1c21;letter-spacing:-1.199px;text-shadow:0.3px 0 0 #1b1c21;">CLEAR</div>
<div class="t " style="left:750.12px;top:1498.28px;font-size:17.95px;line-height:22px;color:#5a5e6c;letter-spacing:0.605px;text-shadow:0.3px 0 0 #5a5e6c;">7 hours ago</div>
<div class="t " style="left:189.60px;top:1546.81px;font-size:25.07px;line-height:31px;color:#4b4f5e;letter-spacing:0.745px;text-shadow:0.3px 0 0 #4b4f5e;">Data Breach Alert: Sensitive Customer Information</div>
<div class="t " style="left:189.60px;top:1590.05px;font-size:24.40px;line-height:30px;color:#4b4f5e;letter-spacing:1.010px;text-shadow:0.3px 0 0 #4b4f5e;">Exposed</div>
<div class="t " style="left:954.00px;top:261.27px;font-size:36.75px;line-height:46px;color:#1b1c21;font-weight:700;">Information Request on Emerging Cybersecurity Threats</div>
<div class="t " style="left:954.00px;top:328.56px;font-size:20.60px;line-height:26px;color:#4b4f5e;letter-spacing:0.661px;text-shadow:0.3px 0 0 #4b4f5e;">Oct 16, 2024, 07:21 PM</div>
<div class="a" style="left:1201px;top:325px;width:2px;height:32px;background:#e3e4e8;"></div>
<div class="t " style="left:1216.00px;top:327.77px;font-size:21.44px;line-height:27px;color:#4b4f5e;letter-spacing:0.717px;text-shadow:0.3px 0 0 #4b4f5e;">6 minutes ago</div>
<div class="a" style="left:1375px;top:323px;width:113px;height:36px;border:1px solid #d3d5dd;border-radius:8px;background:#fff;"></div>
<div class="a" style="left:1383px;top:331px;width:20px;height:20px;border-radius:50%;border:1.5px solid #dcdde2;"></div>
<div class="t " style="left:1411.00px;top:327.64px;font-size:21.82px;line-height:27px;color:#1b1c21;letter-spacing:-1.190px;text-shadow:0.3px 0 0 #1b1c21;">CLEAR</div>
<div class="a" style="left:1502px;top:323px;width:2px;height:35px;background:#e3e4e8;"></div>
<svg class="a" style="left:1515px;top:327px;width:27px;height:27px;" viewBox="0 0 27 27" fill="none"><rect x="1.8" y="1.8" width="23.4" height="23.4" rx="2.5" stroke="#1b1c21" stroke-width="3.4"/><path d="M7 8.5 H20 M7 13.5 H20 M7 18.5 H15" stroke="#1b1c21" stroke-width="2.6"/></svg>
<div class="a" style="left:1568px;top:322px;width:43px;height:39px;border:1px solid #dfe0e6;border-radius:8px;background:#fff;"></div>
<svg class="a" style="left:1579px;top:333px;width:23px;height:17px;" viewBox="0 0 23 17" fill="none"><rect x="1" y="1" width="13" height="14.5" rx="2" fill="#9ea2ae"/><path d="M3 3.2 H12" stroke="#c9ccd4" stroke-width="1"/><rect x="7.5" y="8.3" width="14" height="6.8" rx="3.4" fill="#fff" stroke="#9ea2ae" stroke-width="1.3"/><path d="M11 11.7 H18 M11 11.7 L12.6 10.2 M18 11.7 L16.4 13.2" stroke="#9ea2ae" stroke-width="1.1" stroke-linecap="round"/></svg>
<svg class="a" style="left:2191px;top:332px;width:26px;height:27px;" viewBox="0 0 26 27" fill="none"><path d="M1.5 12 H6.5 V25.5 H1.5 Z" stroke="#5d6170" stroke-width="2.2" stroke-linejoin="round"/><path d="M6.5 12 L11.5 2 C14 2 15.5 3.5 15 6.5 L14 10.5 H22 C24 10.5 25 12 24.5 14 L22.5 23.5 C22 25 21 25.5 19.5 25.5 H6.5" stroke="#5d6170" stroke-width="2.2" stroke-linejoin="round"/></svg>
<div class="a" style="left:2245px;top:326px;width:2px;height:29px;background:#e3e4e8;"></div>
<svg class="a" style="left:2268px;top:333px;width:26px;height:27px;" viewBox="0 0 26 27" fill="none"><path d="M24.5 15 H19.5 V1.5 H24.5 Z" stroke="#5d6170" stroke-width="2.2" stroke-linejoin="round"/><path d="M19.5 15 L14.5 25 C12 25 10.5 23.5 11 20.5 L12 16.5 H4 C2 16.5 1 15 1.5 13 L3.5 3.5 C4 2 5 1.5 6.5 1.5 H19.5" stroke="#5d6170" stroke-width="2.2" stroke-linejoin="round"/></svg>
<div class="a" style="left:2337px;top:269px;width:44px;height:43px;background:#f3f4f6;border:1px solid #d9dae0;border-radius:9px;"></div>
<svg class="a" style="left:2350px;top:280px;width:16px;height:22px;" viewBox="0 0 16 22" fill="none"><path d="M4 3 L12 11 L4 19" stroke="#4b4f5e" stroke-width="3" stroke-linecap="round" stroke-linejoin="round"/></svg>
<div class="t " style="left:954.00px;top:399.66px;font-size:23.49px;line-height:29px;color:#4b4f5e;letter-spacing:0.658px;text-shadow:0.3px 0 0 #4b4f5e;">This RFI seeks detailed information on emerging cybersecurity threats, including recent malware, vulnerabilities, or threat</div>
<div class="t " style="left:954.00px;top:439.28px;font-size:23.71px;line-height:30px;color:#4b4f5e;letter-spacing:0.668px;text-shadow:0.3px 0 0 #4b4f5e;">actor activity. The goal is to enhance understanding and support decision-making for timely mitigation. Contributions from</div>
<div class="t " style="left:954.00px;top:480.04px;font-size:23.55px;line-height:29px;color:#4b4f5e;letter-spacing:0.675px;text-shadow:0.3px 0 0 #4b4f5e;">security teams are encouraged to provide context and collaborative insights.</div>
<div class="t " style="left:953.70px;top:549.63px;font-size:25.60px;line-height:32px;color:#1b1c21;font-weight:700;">Additional Information</div>
<div class="a" style="left:1242px;top:565px;width:1065px;height:2px;background:#e4e5ea;"></div>
<div class="a" style="left:938px;top:590px;width:570px;height:65px;border:5.5px solid #f5564c;"></div>
<div class="t " style="left:953.70px;top:607.88px;font-size:23.15px;line-height:29px;color:#4b4f5e;letter-spacing:0.768px;text-shadow:0.3px 0 0 #4b4f5e;">Shared by: John Doe (john.doe@orgname.com)</div>
<div class="t " style="left:953.70px;top:675.39px;font-size:25.71px;line-height:32px;color:#1b1c21;font-weight:700;">Priority</div>
<div class="t " style="left:953.70px;top:726.61px;font-size:24.50px;line-height:31px;color:#4b4f5e;text-shadow:0.3px 0 0 #4b4f5e;">5</div>
<div class="a" style="left:953px;top:792px;width:1354px;height:2px;background:#e4e5ea;"></div>
<div class="t " style="left:953.70px;top:836.37px;font-size:22.60px;line-height:28px;color:#1b1c21;font-weight:700;">TLP:CLEAR:</div>
<div class="t " style="left:1097.90px;top:835.58px;font-size:23.44px;line-height:29px;color:#4b4f5e;letter-spacing:0.669px;text-shadow:0.3px 0 0 #4b4f5e;">Subject to standard copyright rules, TLP:CLEAR information may be distributed without restriction.</div>
<div class="a" style="left:953px;top:876px;width:1354px;height:2px;background:#e4e5ea;"></div>
<div class="t " style="left:953.40px;top:914.18px;font-size:24.02px;line-height:30px;color:#1b1c21;letter-spacing:0.826px;text-shadow:0.3px 0 0 #1b1c21;">Respond to RFI</div>
<div class="t " style="left:953.40px;top:952.96px;font-size:21.48px;line-height:27px;color:#5a5e6c;font-weight:700;">Response *</div>
<div class="t " style="left:2219.40px;top:953.09px;font-size:22.26px;line-height:28px;color:#4b4f5e;letter-spacing:0.734px;text-shadow:0.3px 0 0 #4b4f5e;">0 / 2000</div>
<div class="a" style="left:953px;top:997px;width:1354px;height:266px;border:2px solid #c9cad6;border-radius:11px;background:#f5f6fa;overflow:hidden;"></div>
<div class="a" style="left:955px;top:999px;width:1350px;height:72px;background:#f2f2f4;border-top-left-radius:9px;border-top-right-radius:9px;"></div>
<div class="a" style="left:970px;top:1069px;width:1319px;height:3px;background:#dcdde3;"></div>
<div class="t " style="left:986.00px;top:1020.20px;font-size:22.50px;line-height:28px;color:#575b68;text-shadow:0.5px 0 0 #575b68;">B</div>
<div class="t " style="left:1055.90px;top:1020.20px;font-size:22.50px;line-height:28px;color:#575b68;text-shadow:0.3px 0 0 #575b68;font-style:italic;">i</div>
<div class="t " style="left:1115.38px;top:1020.20px;font-size:22.50px;line-height:28px;color:#575b68;text-shadow:0.3px 0 0 #575b68;">U</div>
<div class="a" style="left:1115px;top:1043px;width:17px;height:3px;background:#575b68;"></div>
<div class="t " style="left:1178.50px;top:1020.20px;font-size:22.50px;line-height:28px;color:#575b68;text-shadow:0.3px 0 0 #575b68;">A</div>
<svg class="a" style="left:1193.5px;top:1027px;width:6.0px;height:16.40000000000009px;" viewBox="0 0 6 16.4" fill="none"><circle cx="3" cy="3" r="1.9" fill="#575b68"/><circle cx="3" cy="8.2" r="1.9" fill="#575b68"/><circle cx="3" cy="13.4" r="1.9" fill="#575b68"/></svg>
<svg class="a" style="left:1254px;top:1023px;width:26px;height:21px;" viewBox="0 0 26 21" fill="none"><text x="1.5" y="6.2" font-size="6" fill="#575b68" font-family="Liberation Sans">1</text><text x="1.5" y="12" font-size="6" fill="#575b68" font-family="Liberation Sans">2</text><text x="1.5" y="18.2" font-size="6" fill="#575b68" font-family="Liberation Sans">3</text><path d="M8.5 4.4 H24.6 M8.5 10 H24.6 M8.5 16.2 H24.6" stroke="#575b68" stroke-width="2"/></svg>
<svg class="a" style="left:1302px;top:1030px;width:14px;height:7px;" viewBox="0 0 14 7" fill="none"><path d="M0.5 0.2 H13.5 L7 6.8 Z" fill="#2b2d35"/></svg>
<svg class="a" style="left:1343px;top:1023px;width:25px;height:21px;" viewBox="0 0 25 21" fill="none"><circle cx="2.6" cy="4.1" r="1.9" fill="#575b68"/><circle cx="2.6" cy="10" r="1.9" fill="#575b68"/><circle cx="2.6" cy="16.4" r="1.9" fill="#575b68"/><path d="M7 4.1 H23.5 M7 10 H23.5 M7 16.4 H23.5" stroke="#575b68" stroke-width="2"/></svg>
<svg class="a" style="left:1390px;top:1030px;width:14px;height:7px;" viewBox="0 0 14 7" fill="none"><path d="M0.5 0.2 H13.5 L7 6.8 Z" fill="#2b2d35"/></svg>
<svg class="a" style="left:1432px;top:1025px;width:17px;height:17px;" viewBox="0 0 17 17" fill="none"><path d="M8 1 H16 M8.5 1 V17 M13 1 V17" stroke="#575b68" stroke-width="2"/><path d="M8.5 1.2 C3 1.2 1 3.5 1 5.5 C1 7.7 3 9.8 8.5 9.8 Z" fill="#575b68"/></svg>
<svg class="a" style="left:1449px;top:1027px;width:6px;height:16.40000000000009px;" viewBox="0 0 6 16.4" fill="none"><circle cx="3" cy="3" r="1.9" fill="#575b68"/><circle cx="3" cy="8.2" r="1.9" fill="#575b68"/><circle cx="3" cy="13.4" r="1.9" fill="#575b68"/></svg>
<svg class="a" style="left:1510px;top:1024px;width:20px;height:19px;" viewBox="0 0 20 19" fill="none"><path d="M10 1 V18.5 M1 9.5 H19" stroke="#575b68" stroke-width="2.2"/></svg>
<svg class="a" style="left:1529px;top:1027px;width:6px;height:16.40000000000009px;" viewBox="0 0 6 16.4" fill="none"><circle cx="3" cy="3" r="1.9" fill="#575b68"/><circle cx="3" cy="8.2" r="1.9" fill="#575b68"/><circle cx="3" cy="13.4" r="1.9" fill="#575b68"/></svg>
<svg class="a" style="left:1592px;top:1025px;width:18px;height:18px;" viewBox="0 0 18 18" fill="none"><path d="M1.2 6 V1.2 H6 M12 1.2 H16.8 V6 M16.8 12 V16.8 H12 M6 16.8 H1.2 V12" stroke="#575b68" stroke-width="2.4"/></svg>
<svg class="a" style="left:1663px;top:1024px;width:6px;height:18.40000000000009px;" viewBox="0 0 6 18.4" fill="none"><circle cx="3" cy="3" r="2" fill="#575b68"/><circle cx="3" cy="9.2" r="2" fill="#575b68"/><circle cx="3" cy="15.4" r="2" fill="#575b68"/></svg>
<div class="a" style="left:2030px;top:1004px;width:269px;height:47px;background:#e9eaee;border-radius:9px;"></div>
<div class="t " style="left:2070.00px;top:1014.79px;font-size:20.81px;line-height:26px;color:#9a9da8;font-weight:700;">Fang</div>
<div class="a" style="left:2163px;top:1011px;width:2px;height:30px;background:#4b4f5e;"></div>
<div class="t " style="left:2195.80px;top:1013.94px;font-size:21.80px;line-height:27px;color:#9a9da8;font-weight:700;">Defang</div>
<svg class="a" style="left:978px;top:1318px;width:30px;height:28px;" viewBox="1 1 23 22" fill="none"><path d="M21.44 11.05l-9.19 9.19a6 6 0 0 1-8.49-8.49l9.19-9.19a4 4 0 0 1 5.66 5.66l-9.2 9.19a2 2 0 0 1-2.83-2.83l8.49-8.48" stroke="#1c4ee4" stroke-width="2" stroke-linecap="round" stroke-linejoin="round"/></svg>
<div class="t " style="left:1025.80px;top:1319.86px;font-size:21.48px;line-height:27px;color:#1c4ee4;font-weight:700;font-weight:600;">Add Attachments</div>
<div class="a" style="left:2177px;top:1325px;width:130px;height:46px;background:#1c4fe6;border-radius:8px;"></div>
<div class="t " style="left:2206.30px;top:1335.51px;font-size:21.04px;line-height:26px;color:#fff;font-weight:700;">Submit</div>
<div class="a" style="left:953px;top:1403px;width:1354px;height:2px;background:#e4e5ea;"></div>
<div class="t " style="left:953.00px;top:1425.52px;font-size:24.47px;line-height:31px;color:#1b1c21;font-weight:700;">RFI Responses( 1 )</div>
<div class="a" style="left:990px;top:1514px;width:70px;height:70px;border-radius:50%;background:#bfc3cc;box-shadow:0 8px 16px rgba(0,0,0,0.10);"></div>
<div class="t " style="left:1018.16px;top:1535.90px;font-size:20.50px;line-height:26px;color:#fff;text-shadow:0.3px 0 0 #fff;">A</div>
<div class="t " style="left:1105.00px;top:1516.06px;font-size:21.47px;line-height:27px;color:#1b1c21;font-weight:700;">John Doe</div>
<div class="a" style="left:1210px;top:1524px;width:9px;height:9px;border-radius:50%;background:#b8bbc5;"></div>
<div class="t " style="left:1226.00px;top:1518.35px;font-size:17.76px;line-height:22px;color:#555a68;letter-spacing:0.594px;text-shadow:0.3px 0 0 #555a68;">3 minutes ago</div>
<div class="a" style="left:1103px;top:1552px;width:1158px;height:148px;background:#f8f8f9;border-radius:14px;box-shadow:0 0 4px rgba(0,0,0,0.03);"></div>
<div class="t " style="left:1134.50px;top:1576.96px;font-size:25.22px;line-height:32px;color:#1f2024;letter-spacing:0.710px;text-shadow:0.3px 0 0 #1f2024;">Thank you for raising this as an alert. We’ve noticed suspicious phishing emails targeting</div>
<div class="t " style="left:1134.50px;top:1601.77px;font-size:25.18px;line-height:31px;color:#1f2024;letter-spacing:0.761px;text-shadow:0.3px 0 0 #1f2024;">our finance department, originating from seemingly compromised domains.</div>
<div class="a" style="left:2337px;top:269px;width:44px;height:43px;background:#f3f4f6;border:1px solid #d9dae0;border-radius:9px;"></div>
<svg class="a" style="left:2350px;top:280px;width:16px;height:22px;" viewBox="0 0 16 22" fill="none"><path d="M4 3 L12 11 L4 19" stroke="#4b4f5e" stroke-width="3" stroke-linecap="round" stroke-linejoin="round"/></svg>
<div class="t " style="left:2402.00px;top:279.57px;font-size:24.61px;line-height:31px;color:#4b4f5e;letter-spacing:-1.610px;text-shadow:0.3px 0 0 #4b4f5e;">ID</div>
<div class="t " style="left:2430.90px;top:281.18px;font-size:22.84px;line-height:29px;color:#1c4ee4;letter-spacing:0.795px;-webkit-text-stroke:0.3px #1c4ee4;">cffd2408</div>
<svg class="a" style="left:2547px;top:286px;width:25px;height:26px;" viewBox="0 0 25 26" fill="none"><path d="M4 18.5 H3 C2 18.5 1.5 18 1.5 17 V3 C1.5 2 2 1.5 3 1.5 H13.5 C14.5 1.5 15 2 15 3 V4.5" stroke="#5d6170" stroke-width="1.8" stroke-linecap="round"/><rect x="7" y="6" width="15.5" height="18.5" rx="2.2" stroke="#5d6170" stroke-width="1.9"/></svg>
<svg class="a" style="left:2669px;top:284px;width:25px;height:31px;" viewBox="0 0 25 31" fill="none"><path d="M2 3 C2 2 2.5 1.5 3.5 1.5 H21.5 C22.5 1.5 23 2 23 3 V29 L12.5 21 L2 29 Z" stroke="#5d6170" stroke-width="2" stroke-linejoin="round"/></svg>
<svg class="a" style="left:2732px;top:285px;width:35px;height:28px;" viewBox="0 0 35 28" fill="none"><rect x="1.2" y="1.2" width="32.6" height="6.3" rx="2" stroke="#5d6170" stroke-width="2"/><path d="M3.3 7.5 V25 C3.3 26 3.8 26.5 4.8 26.5 H30.2 C31.2 26.5 31.7 26 31.7 25 V7.5" stroke="#5d6170" stroke-width="2" stroke-linejoin="round"/><path d="M13 11 H22" stroke="#5d6170" stroke-width="1.9"/></svg>
<svg class="a" style="left:2816px;top:282px;width:10px;height:28px;" viewBox="0 0 10 28" fill="none"><circle cx="5" cy="4.5" r="2.5" fill="#5d6170"/><circle cx="5" cy="14" r="2.5" fill="#5d6170"/><circle cx="5" cy="23.5" r="2.5" fill="#5d6170"/></svg>
<div class="a" style="left:2358px;top:358px;width:520px;height:2px;background:#e4e5ea;"></div>
<div class="a" style="left:2372px;top:374px;width:493px;height:239px;border:1px solid #d9dae0;border-radius:10px;background:#fff;"></div>
<div class="a" style="left:2373px;top:375px;width:491px;height:80px;background:#ebecf0;border-radius:9px;"></div>
<svg class="a" style="left:2390px;top:400px;width:28px;height:29px;" viewBox="0 0 28 29" fill="none"><path d="M13 25 A11.5 11.5 0 1 1 25 13" stroke="#5d6170" stroke-width="2.2" stroke-linecap="round"/><path d="M12.5 18.5 A5.5 5.5 0 1 1 18.5 12.5" stroke="#5d6170" stroke-width="2.2" stroke-linecap="round"/><path d="M15 15 L26 19 L21.5 20.8 L26.5 25.8 L24.8 27.5 L19.8 22.5 L18 27 Z" fill="#5d6170"/></svg>
<div class="t " style="left:2439.00px;top:401.73px;font-size:23.00px;line-height:29px;color:#1b1c21;font-weight:700;">Action</div>
<div class="t " style="left:2661.60px;top:403.12px;font-size:21.86px;line-height:27px;color:#3d6ae8;letter-spacing:0.744px;-webkit-text-stroke:0.35px #3d6ae8;">+ New Action</div>
<svg class="a" style="left:2810px;top:411px;width:14px;height:10px;" viewBox="0 0 14 10" fill="none"><path d="M1.5 2 L7 7.5 L12.5 2" stroke="#3d6ae8" stroke-width="2.2" stroke-linecap="round" stroke-linejoin="round"/></svg>
<div class="t " style="left:2395.40px;top:483.98px;font-size:22.00px;line-height:28px;color:#1c4ee4;font-weight:700;">0</div>
<div class="t " style="left:2598.00px;top:483.98px;font-size:22.00px;line-height:28px;color:#1c4ee4;font-weight:700;">0</div>
<div class="t " style="left:2714.40px;top:483.98px;font-size:22.00px;line-height:28px;color:#1c4ee4;font-weight:700;">0</div>
<div class="t " style="left:2395.40px;top:514.33px;font-size:17.82px;line-height:22px;color:#4b4f5e;letter-spacing:0.603px;text-shadow:0.3px 0 0 #4b4f5e;">Assigned to me</div>
<div class="t " style="left:2598.00px;top:514.53px;font-size:17.24px;line-height:22px;color:#4b4f5e;letter-spacing:0.897px;text-shadow:0.3px 0 0 #4b4f5e;">Open</div>
<div class="t " style="left:2714.40px;top:514.38px;font-size:17.67px;line-height:22px;color:#4b4f5e;letter-spacing:0.765px;text-shadow:0.3px 0 0 #4b4f5e;">Recommended</div>
<div class="a" style="left:2373px;top:560px;width:491px;height:2px;background:#e4e5ea;"></div>
<div class="t " style="left:2549.70px;top:575.57px;font-size:18.56px;line-height:23px;color:#3d6ae8;letter-spacing:0.552px;-webkit-text-stroke:0.3px #3d6ae8;">View All Actions</div>
<div class="a" style="left:2358px;top:648px;width:520px;height:2px;background:#e4e5ea;"></div>
<svg class="a" style="left:2413px;top:696px;width:34px;height:20px;" viewBox="0 0 34 20" fill="none"><rect x="0.5" y="0.5" width="33" height="7.5" rx="2" fill="#6b6f7d"/><rect x="0.5" y="11.8" width="33" height="7.5" rx="2" fill="#6b6f7d"/></svg>
<div class="t " style="left:2474.00px;top:689.08px;font-size:21.41px;line-height:27px;color:#4b4f5e;letter-spacing:0.792px;text-shadow:0.3px 0 0 #4b4f5e;">Category</div>
<div class="a" style="left:2586px;top:690px;width:24px;height:24px;border-radius:50%;border:1.8px solid #4b4f5e;"></div>
<div class="t " style="left:2596.22px;top:692.46px;font-size:16.00px;line-height:20px;color:#4b4f5e;text-shadow:0.3px 0 0 #4b4f5e;">i</div>
<div class="t " style="left:2474.00px;top:728.99px;font-size:21.68px;line-height:27px;color:#1c4ee4;font-weight:700;">Request For Information</div>
<div class="t " style="left:2402.30px;top:804.67px;font-size:21.15px;line-height:26px;color:#4b4f5e;letter-spacing:0.875px;text-shadow:0.3px 0 0 #4b4f5e;">Risk</div>
<div class="t " style="left:2402.30px;top:836.20px;font-size:22.50px;line-height:28px;color:#1c4ee4;font-weight:700;">6</div>
<div class="a" style="left:0px;top:1624px;width:2880px;height:4px;background:#000;"></div>
</body></html>
